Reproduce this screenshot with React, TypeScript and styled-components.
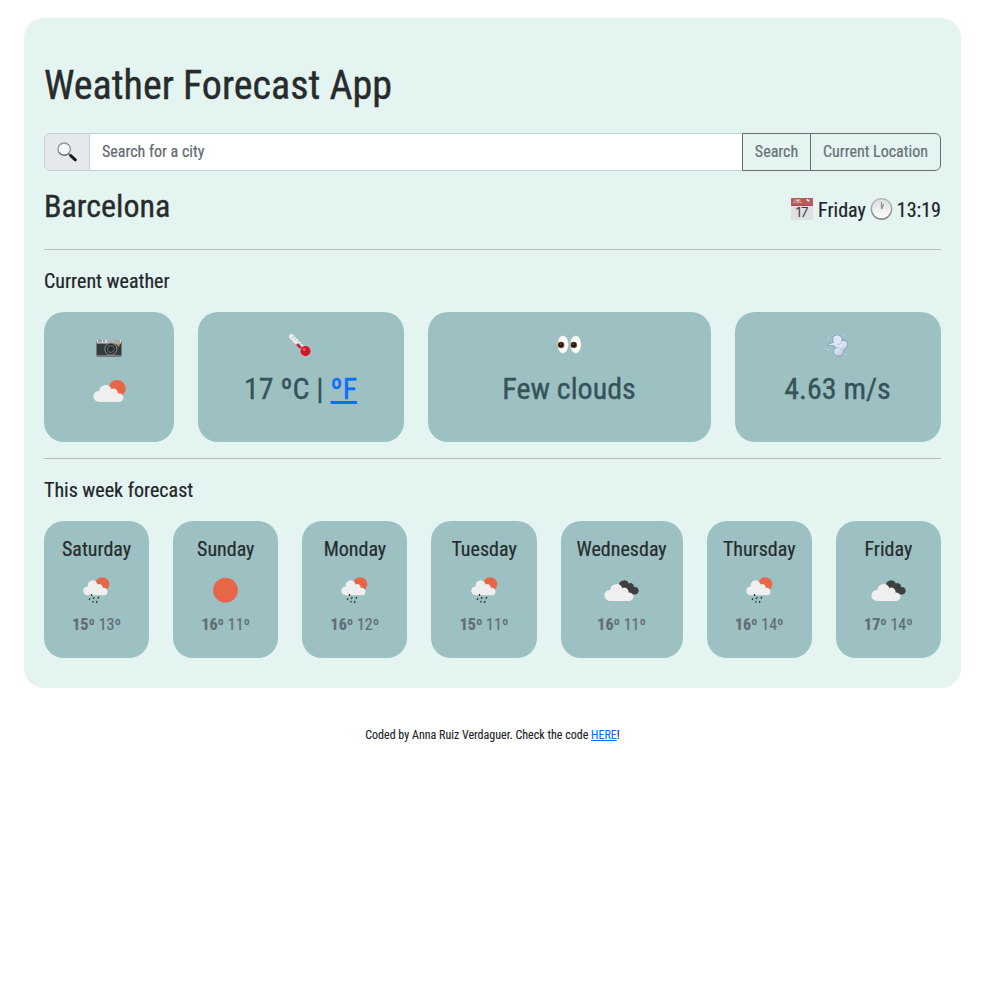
import React from "react";
import styled, { createGlobalStyle } from "styled-components";

const GlobalStyle = createGlobalStyle`
  *, *::before, *::after { box-sizing: border-box; }
  body {
    margin: 0;
    background: #fff;
    color: #212529;
    font-family: "Roboto Condensed", Roboto, sans-serif;
    font-stretch: 75%;
    font-size: 16px;
    line-height: 1.5;
    -webkit-text-stroke: 0.2px currentColor;
  }
  h1, h2, h3, p { margin: 0; font-weight: 400; }
  svg { display: block; flex: none; }
`;

const Page = styled.div`
  padding: 18px 27px 0 24px;
`;

const Panel = styled.main`
  height: 670px;
  padding: 44px 20px 0;
  border-radius: 20px;
  background: #e4f4f1;
`;

const Title = styled.h1`
  font-size: 40px;
  line-height: 48px;
  color: #272b2b;
  -webkit-text-stroke-width: 0.4px;
`;

const SearchForm = styled.form`
  display: flex;
  height: 38px;
  margin-top: 23px;
`;

const SearchIconBox = styled.span`
  display: flex;
  align-items: center;
  justify-content: center;
  width: 46px;
  border: 1px solid #c9cfd4;
  border-radius: 6px 0 0 6px;
  background: #e5e9ec;
`;

const SearchInput = styled.input`
  flex: 1;
  min-width: 0;
  margin-left: -1px;
  padding: 0 12px;
  border: 1px solid #c9cfd4;
  border-radius: 0;
  background: #fff;
  font: inherit;
  font-stretch: 75%;
  outline: none;
  &::placeholder { color: #626b72; opacity: 1; -webkit-text-stroke: 0.2px #626b72; }
`;

const OutlineButton = styled.button<{ $width: number; $last?: boolean }>`
  width: ${(p) => p.$width}px;
  margin-left: -1px;
  padding: 0;
  border: 1px solid #646f74;
  border-radius: ${(p) => (p.$last ? "0 6px 6px 0" : "0")};
  background: transparent;
  color: #667277;
  font: inherit;
  font-stretch: 75%;
  white-space: nowrap;
  -webkit-text-stroke: 0.2px #667277;
`;

const CityRow = styled.div`
  display: flex;
  justify-content: space-between;
  height: 62px;
  margin-top: 16px;
`;

const City = styled.h2`
  font-size: 32px;
  line-height: 38px;
  color: #272b2b;
  -webkit-text-stroke-width: 0.35px;
`;

const DateLine = styled.p`
  display: flex;
  align-items: center;
  height: 30px;
  margin-top: 8px;
  gap: 4px;
  font-size: 20px;
  white-space: nowrap;
  svg { margin-top: -2px; }
  svg:first-child { margin-right: 1px; }
`;

const Divider = styled.hr`
  height: 1px;
  margin: 0;
  border: 0;
  background: #b2bfbd;
`;

const SectionTitle = styled.h3`
  margin-top: 19px;
  font-size: 20px;
  line-height: 24px;
  color: #212529;
`;

const CurrentGrid = styled.section`
  display: grid;
  grid-template-columns: 130px 206px 283px 206px;
  column-gap: 24px;
  height: 130px;
  margin: 19px 0 16px;
`;

const CurrentCard = styled.article`
  display: flex;
  flex-direction: column;
  align-items: center;
  padding-top: 20px;
  border-radius: 20px;
  background: #9dc0c2;
  color: #355358;
`;

const CurrentIcon = styled.div`
  padding-top: 18px;
`;

const CurrentValue = styled.div`
  margin-top: 4px;
  padding-right: 1px;
  font-size: 30px;
  line-height: 45px;
  white-space: pre;
  -webkit-text-stroke-width: 0.35px;
`;

const Link = styled.a<{ $thick?: boolean }>`
  color: #0d6efd;
  text-decoration: underline;
  text-decoration-thickness: ${(p) => (p.$thick ? "3px" : "1px")};
  -webkit-text-stroke-color: #0d6efd;
`;

const WeekRow = styled.section`
  display: grid;
  grid-template-columns: repeat(4, 105.17px) 122px repeat(2, 105.17px);
  justify-content: space-between;
  height: 137px;
  margin-top: 19px;
`;

const DayCard = styled.article`
  display: flex;
  flex-direction: column;
  align-items: center;
  padding-top: 16px;
  border-radius: 20px;
  background: #9dc0c2;
`;

const DayName = styled.h3`
  font-size: 20px;
  line-height: 24px;
  color: #262c2d;
`;

const DayIcon = styled.div`
  height: 36px;
  margin-top: 16px;
`;

const Temps = styled.p`
  color: #616d75;
  white-space: pre;
`;

const Footer = styled.footer`
  margin-top: 38px;
  text-align: center;
  font-size: 12px;
  line-height: 18px;
  -webkit-text-stroke-width: 0.1px;
`;

const PartlyCloudy = () => (
  <svg width="33" height="23" viewBox="0 0 33 23">
    <circle cx="24.2" cy="8.6" r="8.5" fill="#e86648" />
    <path d="M5.5 22a5.5 5.5 0 0 1 .8-11A6.3 6.3 0 0 1 18.4 9a4.4 4.4 0 0 1 6.4 4.4 4.4 4.4 0 1 1 1.2 8.6z" fill="#efefef" />
  </svg>
);

const RainSun = () => (
  <svg width="27" height="30" viewBox="0 0 27 30">
    <circle cx="19.2" cy="7.2" r="7" fill="#e86648" />
    <path d="M4.4 18.2a4.4 4.4 0 0 1 .4-8.8A5 5 0 0 1 14.7 7.4a3.5 3.5 0 0 1 5 3.7 3.6 3.6 0 0 1 4.8 3.4 3.6 3.6 0 0 1-3.5 3.7z" fill="#efefef" />
    <path d="m8.4 17 .3 2M7 21.2l-.9 1.8M11.3 20l-1.1 2M15.8 19.7l-.9 2M10.2 24l-.5 1.5M14 24l-.7 2" stroke="#303a3d" strokeWidth="1.3" />
  </svg>
);

const Sun = () => (
  <svg width="25" height="30" viewBox="0 0 25 30">
    <circle cx="12.5" cy="13.2" r="12.4" fill="#e86648" />
  </svg>
);

const BrokenClouds = () => (
  <svg width="35" height="30" viewBox="0 0 35 30">
    <path d="M14.8 7.5a5.3 5.3 0 0 1 10-1 3.6 3.6 0 0 1 5.2 3.5 3.8 3.8 0 1 1-.6 7.2L20 15z" fill="#3f3f40" />
    <path d="M5.5 24a5.5 5.5 0 0 1 .8-11A6.3 6.3 0 0 1 18.4 11a4.4 4.4 0 0 1 6.2 4.6 4.2 4.2 0 1 1 1.2 8.4z" fill="#efefef" />
  </svg>
);

const Magnifier = () => (
  <svg width="20" height="20" viewBox="0 0 20 20">
    <path d="m12 12 2.5 2.5" stroke="#777d84" strokeWidth="2" />
    <path d="m13.7 13.6 4.6 4.2" stroke="#17191d" strokeWidth="3" strokeLinecap="round" />
    <circle cx="7.2" cy="7.2" r="6.2" fill="#f4f6f7" stroke="#8d99a3" strokeWidth="1.4" />
    <path d="M2.2 10.3A6.3 6.3 0 0 0 12 11.4" fill="none" stroke="#474b50" strokeWidth=".8" />
  </svg>
);

const CalendarLabel = styled.text<{ $size: number }>`
  font-family: Inter, sans-serif;
  font-stretch: 100%;
  font-size: ${(p) => p.$size}px;
`;

const Calendar = () => (
  <svg width="22" height="22" viewBox="0 0 22 22">
    <path d="M0 0h22v22H0z" fill="#dfe0e1" />
    <path d="M0 0h22v8H0z" fill="#b85d5b" />
    <path d="M0 7.2h22v.8H0z" fill="#a94e4d" />
    <CalendarLabel $size={5} x="1.8" y="5" fill="#efcccb">JUL</CalendarLabel>
    <path d="M6.5 0v1.8M17 0v1.8" stroke="#7b4444" />
    <circle cx="6.8" cy="2.2" r="1" fill="#f3eeee" />
    <ellipse cx="17" cy="2.2" rx="1.8" ry="1" fill="#f8f6f6" transform="rotate(35 17 2.2)" />
    <CalendarLabel $size={13} x="11" y="19.4" textAnchor="middle" fill="#3c3e42">17</CalendarLabel>
  </svg>
);

const Clock = () => (
  <svg width="23" height="22" viewBox="0 0 23 22">
    <defs>
      <linearGradient id="clock-rim" x2="0" y2="1">
        <stop stopColor="#b4babc" /><stop offset="1" stopColor="#858a8c" />
      </linearGradient>
      <linearGradient id="clock-face" x2="0" y2="1">
        <stop stopColor="#dcdfde" /><stop offset="1" stopColor="#fcfcfc" />
      </linearGradient>
    </defs>
    <circle cx="11.5" cy="11" r="10.9" fill="url(#clock-rim)" />
    <circle cx="11.5" cy="10.7" r="9.5" fill="url(#clock-face)" />
    <path d="M11.5 4v7l2.3-5" fill="none" stroke="#8b9090" strokeWidth="1.2" />
  </svg>
);

const Camera = () => (
  <svg width="26" height="30" viewBox="0 0 26 30">
    <rect x=".5" y="9" width="25" height="15.5" rx="1" fill="#363a3d" />
    <path d="M1 7.5h24v4H1z" fill="#d7dbdc" />
    <path d="M3 7.5v3M5 7.5v3M8 7.5v3" stroke="#3b4246" strokeWidth=".8" />
    <path d="M11 7h8v4h-8z" fill="#abb5b8" />
    <path d="M19 7.5h5v5h-5z" fill="#ada7a1" />
    <path d="M.5 23h25v1.5H.5z" fill="#777d80" />
    <circle cx="14.8" cy="17" r="6.5" fill="#858b8f" />
    <circle cx="14.8" cy="17" r="5.5" fill="#252b30" />
    <circle cx="14.8" cy="17" r="3.9" fill="#5b6268" />
    <circle cx="14.8" cy="17" r="2.7" fill="#272e34" />
    <path d="M21.6 13.3h1.6" stroke="#f2b928" strokeWidth="2" />
  </svg>
);

const Thermometer = () => (
  <svg width="26" height="30" viewBox="0 0 26 30">
    <path d="M3.5 4.5 16.5 18" stroke="#e7edf0" strokeWidth="5" strokeLinecap="round" />
    <path d="m9 12 7 7" stroke="#c92332" strokeWidth="2.8" />
    <path d="m4.5 6 2-2M7 8l1.6-1.6M9.5 10l1.6-1.6M12 12.5 13.5 11" stroke="#90afb5" strokeWidth=".8" />
    <circle cx="17.5" cy="19.2" r="5.8" fill="#eac0c5" />
    <circle cx="17.5" cy="19.2" r="5.1" fill="#cc1b2d" />
    <circle cx="16.2" cy="17.6" r="1.4" fill="#ef626c" />
  </svg>
);

const Eyes = () => (
  <svg width="26" height="30" viewBox="0 0 26 30">
    {[6, 18.7].map((x) => (
      <g key={x}>
        <ellipse cx={x} cy="12.4" rx="5.5" ry="9" fill="#fbfbfa" stroke="#a9bebf" strokeWidth=".5" />
        <circle cx={x - 1.9} cy="13" r="3.3" fill="#85551f" />
        <circle cx={x - 2.1} cy="12.8" r="2.5" fill="#251414" />
        <circle cx={x - 2.6} cy="12" r=".6" fill="#bda393" />
      </g>
    ))}
  </svg>
);

const Wind = () => (
  <svg width="26" height="30" viewBox="0 0 26 30">
    <defs>
      <linearGradient id="puff" x2="1" y2="1">
        <stop stopColor="#e4edf8" /><stop offset=".6" stopColor="#d8e3f2" /><stop offset="1" stopColor="#a9bcd8" />
      </linearGradient>
    </defs>
    <path
      d="M2.5 12.8Q6 10.6 8.4 10.4 6.6 6 9 3.9q4-2.7 7 .3 1.6 1.8 1 4.3 5-1 5.8 3.6.3 3.8-4 6 .5 5.6-4.7 6-5.300 0-5.600-4.600.2-2.500 2.500-4L9.200 13.800q-3.500.3-6.700-1z"
      fill="url(#puff)"
      stroke="#8399bd"
      strokeWidth=".9"
    />
    <path d="M12 12.500q4 .3 5-4M11 15.500q4 0 7 2.500" fill="none" stroke="#b2c3dc" strokeWidth="1" />
    <path d="m2 7 2 2M3.500 4.500v2M1 17.500h4M17 2.500h3l2 2M18 22.500h4" fill="none" stroke="#b7cddb" strokeWidth=".9" />
  </svg>
);

const DAYS = [
  { name: "Saturday", icon: <RainSun />, high: 15, low: 13 },
  { name: "Sunday", icon: <Sun />, high: 16, low: 11 },
  { name: "Monday", icon: <RainSun />, high: 16, low: 12 },
  { name: "Tuesday", icon: <RainSun />, high: 15, low: 11 },
  { name: "Wednesday", icon: <BrokenClouds />, high: 16, low: 11 },
  { name: "Thursday", icon: <RainSun />, high: 16, low: 14 },
  { name: "Friday", icon: <BrokenClouds />, high: 17, low: 14 },
];

export default function App() {
  return (
    <Page>
      <GlobalStyle />
      <Panel>
        <Title>Weather Forecast App</Title>
        <SearchForm onSubmit={(e) => e.preventDefault()}>
          <SearchIconBox><Magnifier /></SearchIconBox>
          <SearchInput placeholder="Search for a city" />
          <OutlineButton type="submit" $width={69}>Search</OutlineButton>
          <OutlineButton type="button" $width={131} $last>Current Location</OutlineButton>
        </SearchForm>
        <CityRow>
          <City>Barcelona</City>
          <DateLine><Calendar /><span>Friday</span><Clock /><span>13:19</span></DateLine>
        </CityRow>
        <Divider />
        <SectionTitle>Current weather</SectionTitle>
        <CurrentGrid>
          <CurrentCard><Camera /><CurrentIcon><PartlyCloudy /></CurrentIcon></CurrentCard>
          <CurrentCard>
            <Thermometer />
            <CurrentValue>17 ºC | <Link $thick href="#">ºF</Link></CurrentValue>
          </CurrentCard>
          <CurrentCard><Eyes /><CurrentValue>Few clouds</CurrentValue></CurrentCard>
          <CurrentCard><Wind /><CurrentValue>4.63 m/s</CurrentValue></CurrentCard>
        </CurrentGrid>
        <Divider />
        <SectionTitle>This week forecast</SectionTitle>
        <WeekRow>
          {DAYS.map((d) => (
            <DayCard key={d.name}>
              <DayName>{d.name}</DayName>
              <DayIcon>{d.icon}</DayIcon>
              <Temps><strong>{d.high}º</strong> {d.low}º</Temps>
            </DayCard>
          ))}
        </WeekRow>
      </Panel>
      <Footer>Coded by Anna Ruiz Verdaguer. Check the code <Link href="#">HERE</Link>!</Footer>
    </Page>
  );
}
